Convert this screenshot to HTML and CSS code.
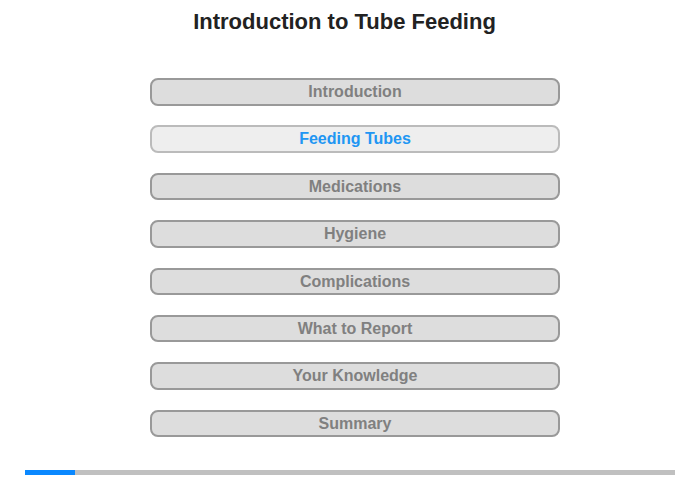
FILE: index.html
```html
<!DOCTYPE html>
<html lang="en">
<head>
    <meta charset="UTF-8">
    <title>Introduction to Tube Feeding</title>
    <link rel="stylesheet" href="styles.css">
</head>
<body>
<div class="page">
    <h1 class="title">Introduction to Tube Feeding</h1>
    <ul class="menu">
        <li><a href="">Introduction</a></li>
        <li><a href="" class="active">Feeding Tubes</a></li>
        <li><a href="">Medications</a></li>
        <li><a href="">Hygiene</a></li>
        <li><a href="">Complications</a></li>
        <li><a href="">What to Report</a></li>
        <li><a href="">Your Knowledge</a></li>
        <li><a href="">Summary</a></li>
    </ul>
    <div class="progress">
        <div class="progress_fill" style="width: 50px;"></div>
    </div>
</div>
</body>
</html>
```

FILE: styles.css
```css
*{
    margin: 0;
    padding: 0;
    list-style: none;
    box-sizing: border-box;
}
body{
    font-family: "Liberation Sans", Arial, sans-serif;
    background: #ffffff;
}
.page{
    width: 700px;
    height: 480px;
}
.title{
    padding: 9px 11px 0 0;
    font-size: 22px;
    line-height: 25px;
    text-align: center;
    color: #222222;
}
.menu{
    width: 410px;
    margin: 44px 0 0 150px;
    display: flex;
    flex-direction: column;
    gap: 19.9px;
}
.menu li a{
    display: block;
    height: 27.5px;
    border: 2px solid #999999;
    border-radius: 8px;
    background: #dddddd;
    font-size: 16px;
    font-weight: bold;
    line-height: 23.5px;
    text-align: center;
    text-decoration: none;
    color: #808080;
}
.menu li a.active{
    background: #eeeeee;
    border-color: #bbbbbb;
    color: #2196f3;
}
.progress{
    margin: 33px 25px 0 25px;
    height: 5px;
    background: #c0c0c0;
}
.progress_fill{
    height: 5px;
    background: #0a88ff;
}
```
